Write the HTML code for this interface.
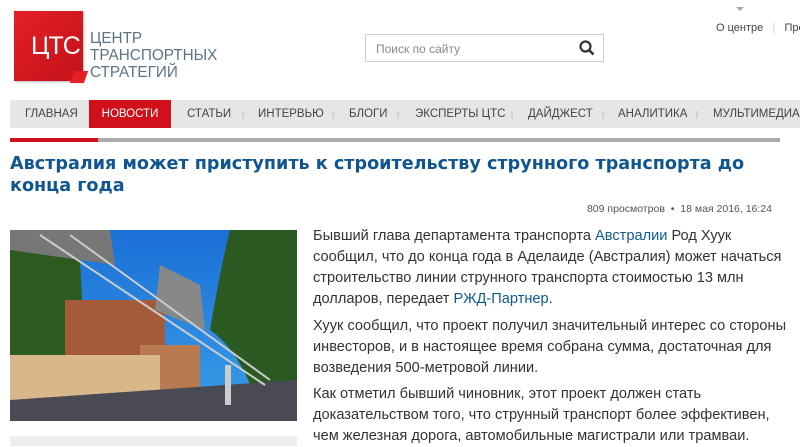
<!DOCTYPE html>
<html><head><meta charset="utf-8"><style>
*{margin:0;padding:0;box-sizing:border-box}
body{width:800px;height:446px;overflow:hidden;background:#fff;font-family:"Liberation Sans",Arial,sans-serif;position:relative;color:#333}
.abs{position:absolute}
.logo{left:14px;top:11px;width:69px;height:70px;background:linear-gradient(135deg,#e41f26,#c4121a);box-shadow:1px 1px 2px rgba(0,0,0,.3)}
.logo span{position:absolute;left:17px;top:21px;color:#fff;font-size:25px;letter-spacing:-1px}
.logo i{position:absolute;right:-3px;bottom:-2px;width:14px;height:12px;background:#e41f26;transform:skewX(-20deg)}
.lt{left:90px;top:30px;color:#5a7486;font-size:15.3px;line-height:17px;white-space:nowrap}
.search{left:365px;top:34px;width:239px;height:28px;border:1px solid #ccc;font-size:12px;color:#888;padding:7px 0 0 10px}
.nav{left:10px;top:100px;width:790px;height:28px;background:#e6e6e6;font-size:11.5px;color:#444;white-space:nowrap}
.nav div{position:absolute;top:8px}
.sep{color:#aaa;font-size:8px;top:10px!important}
.act{left:79px!important;top:0!important;width:82px;height:28px;background:#d0111b;color:#fff;padding-top:8px;text-align:center}
h1{position:absolute;left:10px;top:153px;width:785px;font-family:"DejaVu Sans",Verdana,sans-serif;font-weight:bold;font-size:17.6px;line-height:22px;color:#0f5690}
.txt{left:313px;width:475px;font-size:14.6px;line-height:21px;color:#333}
a{color:#0f5a93;text-decoration:none}
</style></head><body>
<div class="abs logo"><span>ЦТС</span><i></i></div>
<div class="abs lt">ЦЕНТР<br>ТРАНСПОРТНЫХ<br>СТРАТЕГИЙ</div>
<div class="abs search">Поиск по сайту
<svg class="abs" style="right:8px;top:5px" width="16" height="16" viewBox="0 0 16 16"><circle cx="6.5" cy="6.5" r="5" fill="none" stroke="#333" stroke-width="2.2"/><path d="M10 10l4.5 4.5" stroke="#333" stroke-width="2.6"/></svg></div>
<div class="abs" style="left:736px;top:7px;width:0;height:0;border-left:4px solid transparent;border-right:4px solid transparent;border-top:4px solid #aaa"></div>
<div class="abs" style="left:716px;top:22px;font-size:11px;color:#444;white-space:nowrap">О центре&nbsp;&nbsp;&nbsp;<span style="color:#ccc">|</span>&nbsp;&nbsp;&nbsp;Пре</div>
<div class="abs nav">
<div style="left:15px">ГЛАВНАЯ</div>
<div class="act">НОВОСТИ</div>
<div style="left:177px">СТАТЬИ</div><div class="sep" style="left:232px">|</div>
<div style="left:248px">ИНТЕРВЬЮ</div><div class="sep" style="left:322px">|</div>
<div style="left:339px">БЛОГИ</div><div class="sep" style="left:387px">|</div>
<div style="left:405px">ЭКСПЕРТЫ ЦТС</div><div class="sep" style="left:501px">|</div>
<div style="left:518px">ДАЙДЖЕСТ</div><div class="sep" style="left:592px">|</div>
<div style="left:608px">АНАЛИТИКА</div><div class="sep" style="left:686px">|</div>
<div style="left:703px">МУЛЬТИМЕДИА</div>
</div>
<div class="abs" style="left:10px;top:138px;width:88px;height:4px;background:#d0111b"></div>
<div class="abs" style="left:98px;top:138px;width:682px;height:4px;background:#aaa"></div>
<h1>Австралия может приступить к строительству струнного транспорта до конца года</h1>
<div class="abs" style="left:560px;top:203px;width:212px;text-align:right;font-size:10.5px;color:#555">809 просмотров &nbsp;•&nbsp; 18 мая 2016, 16:24</div>
<svg class="abs" style="left:10px;top:230px" width="287" height="191" viewBox="0 0 287 191">
<defs><linearGradient id="s" x1="0" y1="0" x2="0" y2="1"><stop offset="0" stop-color="#1a6fd6"/><stop offset="1" stop-color="#3aa0e8"/></linearGradient></defs>
<rect width="287" height="191" fill="url(#s)"/>
<path d="M0 10 Q40 0 70 30 L75 130 L0 140Z" fill="#2d5a1e"/>
<path d="M220 0 L287 0 L287 191 L250 180 Q230 120 200 100 Q210 40 220 0Z" fill="#2a5a22"/>
<rect x="55" y="70" width="100" height="90" fill="#a55a3a"/>
<rect x="130" y="115" width="60" height="45" fill="#b87a50"/>
<rect x="0" y="125" width="150" height="50" fill="#d8b88a"/>
<path d="M0 170 L287 150 L287 191 L0 191Z" fill="#4a4a55"/>
<path d="M0 0 L100 0 L105 35 L0 20Z" fill="#777"/>
<path d="M150 35 L190 55 L195 100 L145 80Z" fill="#888"/>
<path d="M30 5 L255 155 M60 5 L260 150" stroke="#ccc" stroke-width="2"/>
<rect x="215" y="135" width="6" height="40" fill="#ccc"/>
</svg>
<div class="abs" style="left:10px;top:436px;width:287px;height:10px;background:#eee"></div>
<div class="abs txt" style="top:226px">Бывший глава департамента транспорта <a>Австралии</a> Род Хуук сообщил, что до конца года в Аделаиде (Австралия) может начаться строительство линии струнного транспорта стоимостью 13 млн долларов, передает <a>РЖД-Партнер</a>.</div>
<div class="abs txt" style="top:316px">Хуук сообщил, что проект получил значительный интерес со стороны инвесторов, и в настоящее время собрана сумма, достаточная для возведения 500-метровой линии.</div>
<div class="abs txt" style="top:384px">Как отметил бывший чиновник, этот проект должен стать доказательством того, что струнный транспорт более эффективен, чем железная дорога, автомобильные магистрали или трамваи.</div>
</body></html>
